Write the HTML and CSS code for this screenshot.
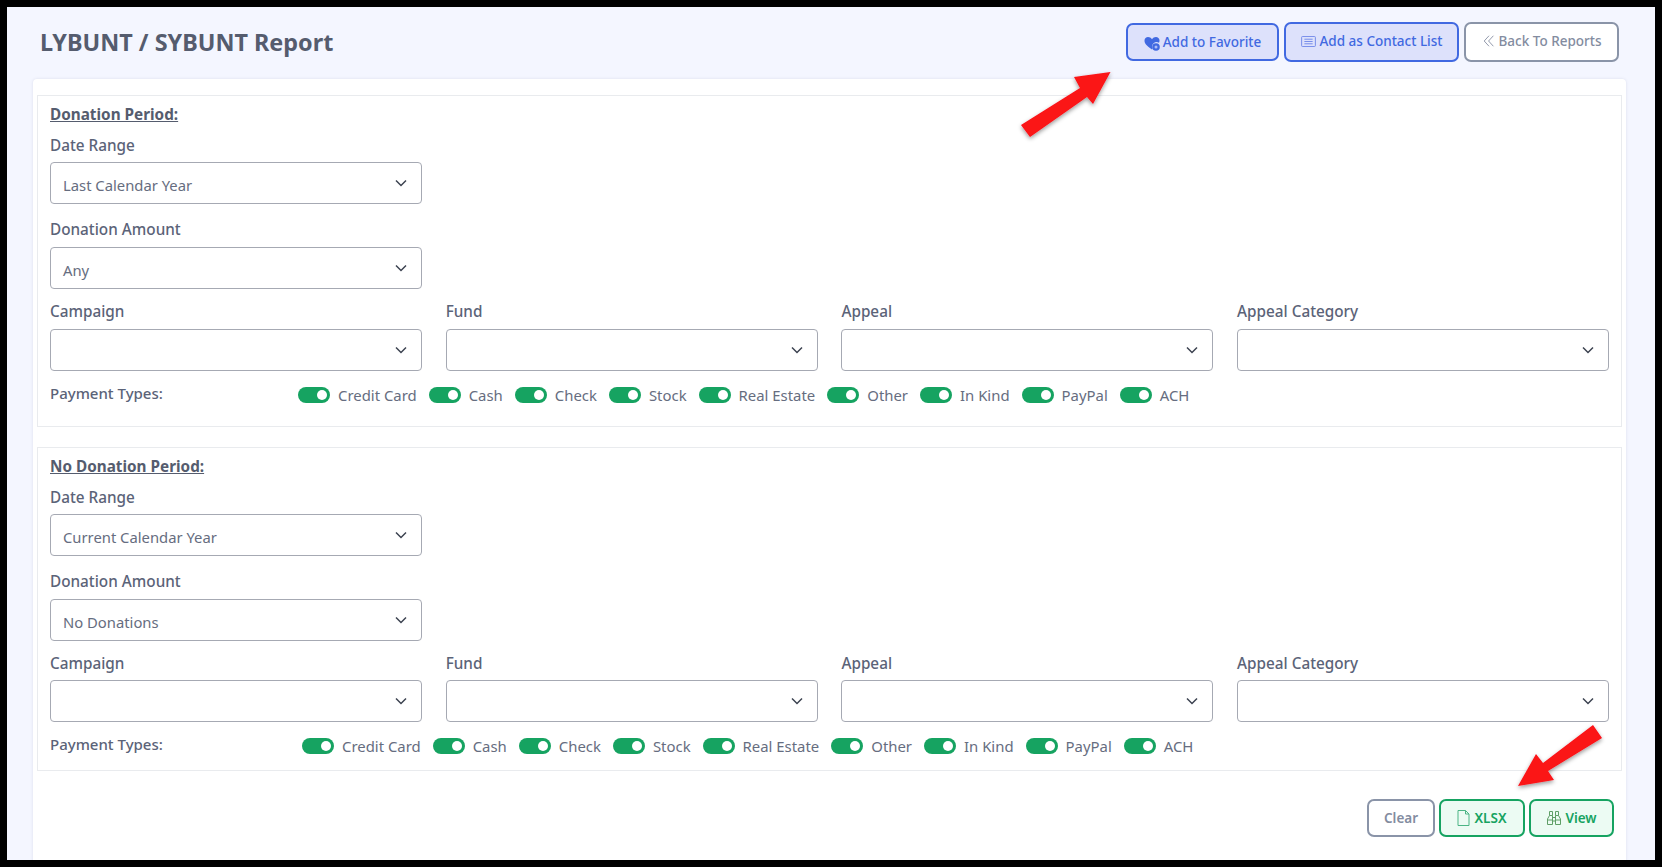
FILE: index.html
```html
<!DOCTYPE html>
<html lang="en">
<head>
<meta charset="utf-8">
<title>LYBUNT / SYBUNT Report</title>
<link rel="stylesheet" href="styles.css">
</head>
<body>
<div class="frame">
  <header class="topbar">
    <h1 class="title">LYBUNT / SYBUNT Report</h1>
    <div class="actions">
      <button class="btn btn-blue btn-fav"><svg class="ico ico-heart" viewBox="0 0 16 16"><path fill="currentColor" d="M8 14.500C2 10.500 .5 8 .5 5.500 .5 3.300 2.200 2 4 2c1.700 0 3 .8 4 2.200C9 2.800 10.300 2 12 2c1.800 0 3.500 1.300 3.500 3.500 0 .8-.2 1.600-.5 2.300A4.500 4.500 0 0 0 8.500 13.500z"/><circle cx="12" cy="12" r="3.800" fill="currentColor"/><circle cx="12" cy="12" r="1.500" fill="#aebbf5"/></svg>Add to Favorite</button>
      <button class="btn btn-blue btn-list"><svg class="ico ico-list" viewBox="0 0 16 12" fill="none" stroke="#6f86e8"><rect x=".5" y=".5" width="15" height="11" rx="1"/><path d="M3.500 3.500h9M3.500 6h9M3.500 8.500h9"/></svg>Add as Contact List</button>
      <button class="btn btn-gray btn-back"><svg class="ico" viewBox="0 0 16 16" fill="none" stroke="currentColor"><path d="M8 2 2.500 8 8 14M13 2 7.500 8 13 14"/></svg>Back To Reports</button>
    </div>
  </header>
  <main class="card">
    <section class="box box-first">
      <h2 class="box-title">Donation Period:</h2>
      <div class="field">
        <label class="label">Date Range</label>
        <div class="select"><span>Last Calendar Year</span><svg class="chev" viewBox="0 0 16 16"><path d="M3 5.500 8 10.500 13 5.500"/></svg></div>
      </div>
      <div class="field">
        <label class="label">Donation Amount</label>
        <div class="select"><span>Any</span><svg class="chev" viewBox="0 0 16 16"><path d="M3 5.500 8 10.500 13 5.500"/></svg></div>
      </div>
      <div class="grid">
        <div><label class="label">Campaign</label><div class="select"><span></span><svg class="chev" viewBox="0 0 16 16"><path d="M3 5.500 8 10.500 13 5.500"/></svg></div></div>
        <div><label class="label">Fund</label><div class="select"><span></span><svg class="chev" viewBox="0 0 16 16"><path d="M3 5.500 8 10.500 13 5.500"/></svg></div></div>
        <div><label class="label">Appeal</label><div class="select"><span></span><svg class="chev" viewBox="0 0 16 16"><path d="M3 5.500 8 10.500 13 5.500"/></svg></div></div>
        <div><label class="label">Appeal Category</label><div class="select"><span></span><svg class="chev" viewBox="0 0 16 16"><path d="M3 5.500 8 10.500 13 5.500"/></svg></div></div>
      </div>
      <div class="pay">
        <div class="pay-label">Payment Types:</div>
        <div class="pay-items">
          <div class="item"><i class="toggle"></i>Credit Card</div>
          <div class="item"><i class="toggle"></i>Cash</div>
          <div class="item"><i class="toggle"></i>Check</div>
          <div class="item"><i class="toggle"></i>Stock</div>
          <div class="item"><i class="toggle"></i>Real Estate</div>
          <div class="item"><i class="toggle"></i>Other</div>
          <div class="item"><i class="toggle"></i>In Kind</div>
          <div class="item"><i class="toggle"></i>PayPal</div>
          <div class="item"><i class="toggle"></i>ACH</div>
        </div>
      </div>
    </section>
    <section class="box box-second">
      <h2 class="box-title">No Donation Period:</h2>
      <div class="field">
        <label class="label">Date Range</label>
        <div class="select"><span>Current Calendar Year</span><svg class="chev" viewBox="0 0 16 16"><path d="M3 5.500 8 10.500 13 5.500"/></svg></div>
      </div>
      <div class="field">
        <label class="label">Donation Amount</label>
        <div class="select"><span>No Donations</span><svg class="chev" viewBox="0 0 16 16"><path d="M3 5.500 8 10.500 13 5.500"/></svg></div>
      </div>
      <div class="grid">
        <div><label class="label">Campaign</label><div class="select"><span></span><svg class="chev" viewBox="0 0 16 16"><path d="M3 5.500 8 10.500 13 5.500"/></svg></div></div>
        <div><label class="label">Fund</label><div class="select"><span></span><svg class="chev" viewBox="0 0 16 16"><path d="M3 5.500 8 10.500 13 5.500"/></svg></div></div>
        <div><label class="label">Appeal</label><div class="select"><span></span><svg class="chev" viewBox="0 0 16 16"><path d="M3 5.500 8 10.500 13 5.500"/></svg></div></div>
        <div><label class="label">Appeal Category</label><div class="select"><span></span><svg class="chev" viewBox="0 0 16 16"><path d="M3 5.500 8 10.500 13 5.500"/></svg></div></div>
      </div>
      <div class="pay pay-second">
        <div class="pay-label">Payment Types:</div>
        <div class="pay-items">
          <div class="item"><i class="toggle"></i>Credit Card</div>
          <div class="item"><i class="toggle"></i>Cash</div>
          <div class="item"><i class="toggle"></i>Check</div>
          <div class="item"><i class="toggle"></i>Stock</div>
          <div class="item"><i class="toggle"></i>Real Estate</div>
          <div class="item"><i class="toggle"></i>Other</div>
          <div class="item"><i class="toggle"></i>In Kind</div>
          <div class="item"><i class="toggle"></i>PayPal</div>
          <div class="item"><i class="toggle"></i>ACH</div>
        </div>
      </div>
    </section>
    <div class="footer">
      <button class="btn btn-gray btn-clear">Clear</button>
      <button class="btn btn-green btn-xlsx"><svg class="ico ico-file" viewBox="0 0 13 16" fill="none" stroke="#4cb585"><path d="M1 .5h7.500L12 4v11.500H1z"/><path d="M8.500 .5V4H12"/></svg>XLSX</button>
      <button class="btn btn-green btn-view"><svg class="ico ico-bino" viewBox="0 0 16 16" fill="none" stroke="#5f9e66"><path d="M3.500 1.500h3v4h-3zM9.500 1.500h3v4h-3zM3.500 5.500 1.500 9v5.500h5V5.500M12.500 5.500 14.500 9v5.500h-5V5.500M6.500 7.500h3M6.500 11h3M1.500 10h5M9.500 10h5"/></svg>View</button>
    </div>
  </main>
  <svg class="arrows" viewBox="0 0 1662 867">
    <defs><filter id="sh" x="-20%" y="-20%" width="140%" height="140%"><feDropShadow dx="0" dy="2" stdDeviation="2" flood-color="#000" flood-opacity=".4"/></filter></defs>
    <path filter="url(#sh)" fill="#fb1219" d="M1110.500 72 1074 77 1080 88 1021 125 1030 137 1087 97 1093 104z"/>
    <path filter="url(#sh)" fill="#fb1219" d="M1518 786 1536 754 1543 763 1593 725 1602 738 1548 771 1554 780z"/>
  </svg>
</div>
</body>
</html>
```
FILE: styles.css
```css
* { box-sizing: border-box; }
html, body { margin: 0; height: 100%; }
body {
  background: #000;
  padding: 7px;
  overflow: hidden;
  font-family: "Noto Sans", "Open Sans", sans-serif;
  color: #5b6378;
}
.frame {
  position: relative;
  width: 1648px;
  height: 853px;
  background: #f4f6ff;
  overflow: hidden;
}
.topbar {
  display: flex;
  justify-content: space-between;
  align-items: center;
  height: 72px;
  padding: 0 36px 0 33px;
}
.title {
  margin: -2px 0 0;
  font-size: 23.400px;
  font-weight: 700;
  color: #555c6e;
}
.actions { display: flex; align-items: center; gap: 5px; margin-top: -2px; }
.btn {
  display: inline-flex;
  align-items: center;
  justify-content: center;
  border: 2px solid;
  border-radius: 7px;
  font-family: inherit;
  font-size: 13.500px;
  font-weight: 500;
  padding: 0;
  white-space: nowrap;
}
.ico { width: 14px; height: 14px; margin-right: 3px; }
.ico-heart { width: 16px; height: 16px; margin-top: 2px; margin-right: 3px; }
.ico-list { width: 15px; height: 11px; margin-right: 4px; }
.ico-file { width: 13px; height: 16px; margin-right: 4px; }
.ico-bino { width: 16px; height: 16px; }
.btn-blue { background: #dde1fb; border-color: #4169e1; color: #4169e1; }
.btn-gray { background: #fff; border-color: #8a94a8; color: #838ca0; }
.btn-green { background: #ecfbf3; border-color: #16a361; color: #16a361; font-weight: 600; }
.btn-clear { font-weight: 600; padding-bottom: 1px; }
.btn-xlsx, .btn-view { padding-bottom: 1px; }
.btn-fav { width: 153px; height: 38px; }
.btn-list { width: 175px; height: 40px; padding-bottom: 2px; }
.btn-back { width: 155px; height: 40px; padding-bottom: 2px; }
.btn-clear { width: 68px; height: 38px; }
.btn-xlsx { width: 86px; height: 38px; }
.btn-view { width: 85px; height: 38px; }
.card {
  width: 1593px;
  height: 790px;
  margin-left: 26px;
  padding: 16px 4px 0 4px;
  background: #fff;
  border-radius: 4px 4px 0 0;
  box-shadow: 0 0 3px rgba(80, 90, 130, .15);
}
.box {
  border: 1px solid #e9ebee;
  padding: 8px 12px 0;
}
.box-first { height: 332px; }
.box-second { height: 324px; margin-top: 20px; }
.box-title {
  margin: 0;
  font-size: 15.300px;
  font-weight: 700;
  line-height: 20px;
  text-decoration: underline;
  color: #555c6e;
}
.label {
  display: block;
  font-size: 15.300px;
  font-weight: 500;
  line-height: 20px;
  color: #5b6378;
}
.field { margin-top: 11px; }
.field + .field { margin-top: 15px; }
.select {
  display: flex;
  align-items: center;
  justify-content: space-between;
  width: 372px;
  height: 42px;
  margin-top: 7px;
  padding: 4px 12px 0 12px;
  border: 1px solid #a6a9b3;
  border-radius: 4px;
  background: #fff;
  font-size: 14.800px;
  color: #666d80;
}
.field + .field .select { margin-top: 8px; }
.box-first .grid .select { margin-top: 8px; }
.chev {
  width: 16px;
  height: 16px;
  margin-top: -4px;
  fill: none;
  stroke: #3c4250;
  stroke-width: 1.500;
}
.grid {
  display: grid;
  grid-template-columns: repeat(4, 372px);
  column-gap: 23.700px;
  margin-top: 12px;
}
.pay {
  display: flex;
  align-items: flex-start;
  margin-top: 12px;
}
.pay-label {
  width: 248px;
  font-size: 15px;
  font-weight: 500;
  line-height: 20px;
}
.pay-second .pay-label { width: 252px; }
.pay-items {
  display: flex;
  gap: 12px;
  font-size: 14.900px;
  line-height: 20px;
  padding-top: 2px;
  color: #666d80;
}
.item { display: flex; align-items: center; gap: 8px; }
.toggle {
  position: relative;
  display: block;
  width: 32px;
  height: 16px;
  border-radius: 8px;
  background: #16a361;
}
.toggle::after {
  content: "";
  position: absolute;
  top: 3px;
  right: 3px;
  width: 10px;
  height: 10px;
  border-radius: 50%;
  background: #fff;
}
.footer {
  display: flex;
  justify-content: flex-end;
  gap: 4px;
  margin-top: 28px;
  padding-right: 8px;
}
.arrows {
  position: absolute;
  left: -7px;
  top: -7px;
  width: 1662px;
  height: 867px;
  pointer-events: none;
}
```
